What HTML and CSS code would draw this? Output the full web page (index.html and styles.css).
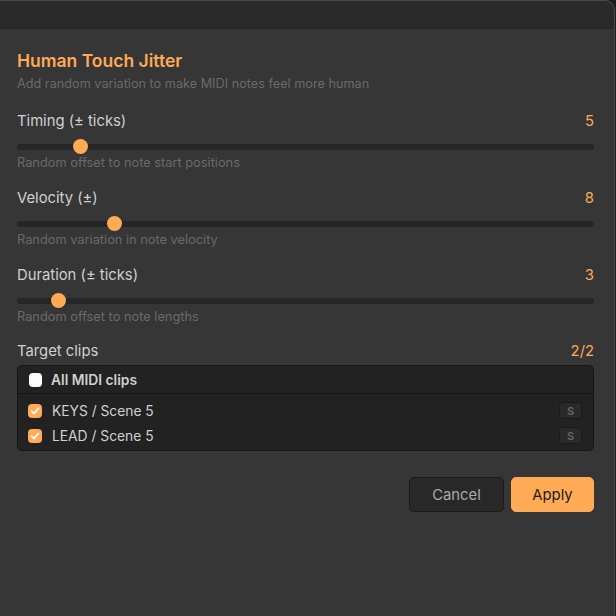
FILE: index.html
```html
<!DOCTYPE html>
<html lang="en">
<head>
  <meta charset="UTF-8" />
  <title>Human Touch Jitter</title>
  <link rel="stylesheet" href="styles.css">
</head>
<body>
  <div class="window">
    <div class="titlebar"></div>

    <div class="content">
      <h1>Human Touch Jitter</h1>
      <p class="subtitle">Add random variation to make MIDI notes feel more human</p>

      <div class="field">
        <div class="field-head">
          <span>Timing (± ticks)</span>
          <span class="value">5</span>
        </div>
        <input type="range" min="0" max="50" value="5" class="slider">
        <div class="hint">Random offset to note start positions</div>
      </div>

      <div class="field">
        <div class="field-head">
          <span>Velocity (±)</span>
          <span class="value">8</span>
        </div>
        <input type="range" min="0" max="50" value="8" class="slider">
        <div class="hint">Random variation in note velocity</div>
      </div>

      <div class="field">
        <div class="field-head">
          <span>Duration (± ticks)</span>
          <span class="value">3</span>
        </div>
        <input type="range" min="0" max="50" value="3" class="slider">
        <div class="hint">Random offset to note lengths</div>
      </div>

      <div class="field-head clips-head">
        <span>Target clips</span>
        <span class="value">2/2</span>
      </div>
      <div class="clips">
        <label class="clip all">
          <span class="box"></span>
          <span class="clip-name">All MIDI clips</span>
        </label>
        <label class="clip">
          <span class="box checked"><svg viewBox="0 0 14 14" width="14" height="14"><path d="M3.6 7.2 L6 9.6 L10.4 4.4" fill="none" stroke="#fff" stroke-width="1.8" stroke-linecap="round" stroke-linejoin="round"/></svg></span>
          <span class="clip-name">KEYS / Scene 5</span>
          <span class="solo">S</span>
        </label>
        <label class="clip">
          <span class="box checked"><svg viewBox="0 0 14 14" width="14" height="14"><path d="M3.6 7.2 L6 9.6 L10.4 4.4" fill="none" stroke="#fff" stroke-width="1.8" stroke-linecap="round" stroke-linejoin="round"/></svg></span>
          <span class="clip-name">LEAD / Scene 5</span>
          <span class="solo">S</span>
        </label>
      </div>

      <div class="actions">
        <button class="btn">Cancel</button>
        <button class="btn primary">Apply</button>
      </div>
    </div>
  </div>
</body>
</html>
```

FILE: styles.css
```css
* {
  box-sizing: border-box;
}
html, body {
  height: 100%;
}
body {
  margin: 0;
  background: #1e1e1e;
  font-family: Inter, "Liberation Sans", sans-serif;
  color: #d0d0d0;
  overflow: hidden;
}
.window {
  width: 615px;
  height: 640px;
  background: #363636;
  border-top: 1px solid #4a4a4a;
  border-right: 1px solid #4a4a4a;
  border-top-right-radius: 10px;
  overflow: hidden;
}
.titlebar {
  height: 28px;
  background: #2a2a2a;
  border-bottom: 1px solid #262626;
}
.content {
  padding: 21px 20px 0 17px;
}
h1 {
  margin: 0;
  font-size: 17.5px;
  font-weight: 600;
  color: #ffaa55;
  line-height: 22px;
}
.subtitle {
  margin: 3px 0 0;
  font-size: 12.7px;
  color: #6a6a6a;
  line-height: 18px;
}
.field {
  margin-top: 18px;
}
.field + .field {
  margin-top: 17px;
}
.field-head {
  display: flex;
  justify-content: space-between;
  font-size: 14.8px;
  line-height: 21px;
}
.value {
  color: #ffaa55;
}
.slider {
  -webkit-appearance: none;
  appearance: none;
  display: block;
  width: 100%;
  height: 15px;
  margin: 7px 0 0;
  background: transparent;
}
.slider::-webkit-slider-runnable-track {
  height: 6px;
  background: #262626;
  border-radius: 3px;
}
.slider::-webkit-slider-thumb {
  -webkit-appearance: none;
  width: 15px;
  height: 15px;
  margin-top: -4.5px;
  border-radius: 50%;
  background: #ffaa55;
  border: none;
}
.hint {
  margin-top: 1px;
  font-size: 12.8px;
  color: #6a6a6a;
  line-height: 16px;
}
.clips-head {
  margin-top: 16px;
}
.clips {
  margin-top: 3px;
  background: #222222;
  border: 1px solid #161616;
  border-radius: 5px;
}
.clip {
  display: flex;
  align-items: center;
  gap: 10px;
  height: 25px;
  padding: 0 11px 0 10px;
  font-size: 13.8px;
}
.clip.all {
  height: 28px;
  font-weight: 600;
  border-bottom: 1px solid #151515;
  margin-bottom: 4px;
  padding-left: 11px;
  gap: 9px;
}
.clip:last-child {
  margin-bottom: 2px;
}
.clip-name {
  flex: 1;
}
.box {
  width: 13px;
  height: 14px;
  border-radius: 4px;
  background: #ffffff;
  display: flex;
}
.box.checked {
  width: 14px;
  background: #ffaa55;
}
.solo {
  width: 23px;
  height: 17px;
  border: 1px solid #1a1a1a;
  border-radius: 4px;
  background: #2a2a2a;
  color: #666;
  font-size: 11px;
  font-weight: 600;
  display: flex;
  align-items: center;
  justify-content: center;
}
.actions {
  display: flex;
  justify-content: flex-end;
  gap: 7px;
  margin-top: 26px;
}
.btn {
  height: 35px;
  padding: 0 20px;
  border-radius: 5px;
  border: 1px solid #1a1a1a;
  background: #282828;
  color: #aaaaaa;
  font-family: inherit;
  font-size: 14.8px;
  min-width: 95px;
}
.btn.primary {
  min-width: 83px;
  background: #ffaa55;
  border-color: #ffaa55;
  color: #1a1a1a;
}
```
